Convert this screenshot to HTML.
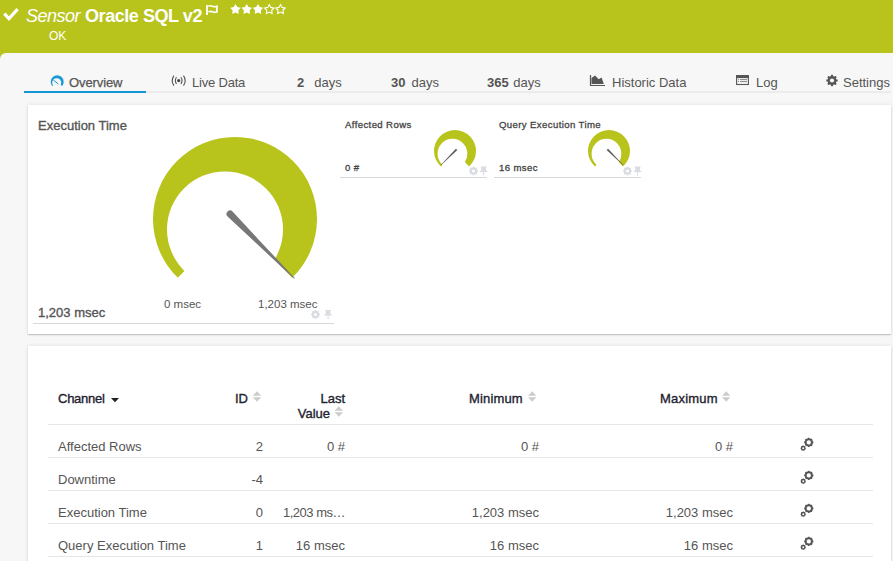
<!DOCTYPE html>
<html><head><meta charset="utf-8">
<style>
*{box-sizing:border-box;margin:0;padding:0}
html,body{width:893px;height:561px;overflow:hidden;background:#b8c41c;font-family:"Liberation Sans",sans-serif;position:relative}
.abs{position:absolute;white-space:nowrap}
#hdr{position:absolute;left:0;top:0;width:893px;height:53px;background:#b8c41c}
#page{position:absolute;left:0;top:53px;width:893px;height:508px;background:#f7f7f7;border-top-left-radius:6px}
.t{color:#fff}
.tab{position:absolute;top:75px;font-size:13px;color:#555;line-height:15px;white-space:nowrap}
.tab b{color:#555}
.card{position:absolute;background:#fff;box-shadow:0 0 4px rgba(0,0,0,0.10),0 1px 1px rgba(0,0,0,0.16)}
.lbl{position:absolute;white-space:nowrap;font-size:13px;line-height:15px;color:#555}
.med{-webkit-text-stroke:0.35px currentColor}
.sm{font-size:9.6px;color:#444;line-height:12px;-webkit-text-stroke:0.3px currentColor;letter-spacing:0.38px}
.hline{position:absolute;height:1px;background:#d8d8d8}
.th{position:absolute;white-space:nowrap;font-size:13px;color:#1e2230;line-height:15px;-webkit-text-stroke:0.35px currentColor}
.td{position:absolute;white-space:nowrap;font-size:13px;color:#555;line-height:15px}
.r{text-align:right}
</style></head><body>
<div id="hdr">
  <svg class="abs" style="left:3px;top:8px" width="16" height="13" viewBox="0 0 16 13"><path d="M1.3 5.6 L6 10.6 L14.6 1.2" fill="none" stroke="#fff" stroke-width="3.2"/></svg>
  <div class="abs t" style="left:26px;top:5px;font-size:18px;line-height:22px"><i style="letter-spacing:-0.5px">Sensor</i> <b style="letter-spacing:-0.45px">Oracle SQL v2</b></div>
  <!-- flag -->
  <svg class="abs" style="left:205px;top:4px" width="14" height="12" viewBox="0 0 14 12"><path d="M2 1 V11" stroke="#fff" stroke-width="1.8"/><path d="M3.4 2.1 Q5.5 1.3 7.5 2.3 Q9.8 3.2 11.9 2.3 V7.9 Q9.8 8.7 7.5 7.8 Q5.5 6.9 3.4 7.8" fill="none" stroke="#fff" stroke-width="1.7"/></svg>
  <!-- stars -->
  <svg class="abs" style="left:0;top:0" width="300" height="20" viewBox="0 0 300 20">
    
    <path transform="translate(235.5,9.5)" d="M0.00,-5.50 L1.76,-2.43 L5.23,-1.70 L2.85,0.93 L3.23,4.45 L0.00,3.00 L-3.23,4.45 L-2.85,0.93 L-5.23,-1.70 L-1.76,-2.43 Z" fill="#fff"/>
    <path transform="translate(246.75,9.5)" d="M0.00,-5.50 L1.76,-2.43 L5.23,-1.70 L2.85,0.93 L3.23,4.45 L0.00,3.00 L-3.23,4.45 L-2.85,0.93 L-5.23,-1.70 L-1.76,-2.43 Z" fill="#fff"/>
    <path transform="translate(258,9.5)" d="M0.00,-5.50 L1.76,-2.43 L5.23,-1.70 L2.85,0.93 L3.23,4.45 L0.00,3.00 L-3.23,4.45 L-2.85,0.93 L-5.23,-1.70 L-1.76,-2.43 Z" fill="#fff"/>
    <path transform="translate(269.25,9.5)" d="M0.00,-4.90 L1.53,-2.10 L4.66,-1.51 L2.47,0.80 L2.88,3.96 L0.00,2.60 L-2.88,3.96 L-2.47,0.80 L-4.66,-1.51 L-1.53,-2.10 Z" fill="none" stroke="#fff" stroke-width="1.1"/>
    <path transform="translate(280.5,9.5)" d="M0.00,-4.90 L1.53,-2.10 L4.66,-1.51 L2.47,0.80 L2.88,3.96 L0.00,2.60 L-2.88,3.96 L-2.47,0.80 L-4.66,-1.51 L-1.53,-2.10 Z" fill="none" stroke="#fff" stroke-width="1.1"/>
  </svg>
  <div class="abs t" style="left:49px;top:29px;font-size:12px;line-height:14px">OK</div>
</div>
<div id="page"></div>

<!-- tabs -->
<div class="abs" style="left:24px;top:91px;width:867px;height:2px;background:#ececec"></div>
<div class="abs" style="left:24px;top:91px;width:122px;height:2px;background:#1496d5"></div>
<svg class="abs" style="left:0;top:0" width="100" height="100" viewBox="0 0 100 100">
  <path d="M57.2,82.4 L52.2,86 A6.5,6.5 0 1 1 62.2,86 Z" fill="#1c9ad6"/>
  <circle cx="56.7" cy="82.7" r="4.5" fill="#f7f7f7"/>
  <path d="M53.3,80 L58.3,84" stroke="#1c9ad6" stroke-width="1"/>
</svg>
<div class="tab" style="left:69px;-webkit-text-stroke:0.25px #555;letter-spacing:-0.1px">Overview</div>
<svg class="abs" style="left:0;top:0" width="200" height="100" viewBox="0 0 200 100">
  <circle cx="178.7" cy="80.6" r="1.6" fill="#444"/>
  <path d="M176.5,77.3 Q174.2,80.6 176.5,83.9 M180.9,77.3 Q183.2,80.6 180.9,83.9" fill="none" stroke="#555" stroke-width="1.1"/>
  <path d="M173.9,75.6 Q170.6,80.6 173.9,85.6 M183.5,75.6 Q186.8,80.6 183.5,85.6" fill="none" stroke="#555" stroke-width="1.1"/>
</svg>
<div class="tab" style="left:192px;letter-spacing:-0.2px">Live Data</div>
<div class="tab" style="left:297px"><b>2</b><span style="margin-left:10px">days</span></div>
<div class="tab" style="left:391px"><b>30</b><span style="margin-left:6px">days</span></div>
<div class="tab" style="left:487px"><b>365</b><span style="margin-left:4.5px">days</span></div>
<svg class="abs" style="left:589px;top:74px" width="18" height="13" viewBox="0 0 18 13">
  <path d="M1.5 1 V11.5 H16" fill="none" stroke="#555" stroke-width="1.2"/>
  <path d="M2.5 10 V4 L6 1.5 L9.8 5.3 L12.6 3.5 L14.8 10 Z" fill="#555"/>
</svg>
<div class="tab" style="left:612px">Historic Data</div>
<svg class="abs" style="left:735px;top:74px" width="15" height="12" viewBox="0 0 15 12">
  <rect x="1.6" y="1.6" width="11.8" height="8.9" fill="none" stroke="#555" stroke-width="1.1"/>
  <rect x="1.1" y="1.1" width="12.8" height="3" fill="#555"/>
  <path d="M5 5.6 H12 M5 7.6 H12 M3 5.6 H4 M3 7.6 H4" stroke="#777" stroke-width="0.9"/>
</svg>
<div class="tab" style="left:756px">Log</div>
<svg class="abs" style="left:0;top:0" width="893" height="100" viewBox="0 0 893 100">
  <g transform="translate(832,80.5)">
    <circle r="3.4" fill="none" stroke="#555" stroke-width="2.1"/>
    <g fill="#555">
      <rect x="-1" y="-5.7" width="2" height="11.4"/>
      <rect x="-1" y="-5.7" width="2" height="11.4" transform="rotate(45)"/>
      <rect x="-1" y="-5.7" width="2" height="11.4" transform="rotate(90)"/>
      <rect x="-1" y="-5.7" width="2" height="11.4" transform="rotate(135)"/>
    </g>
    <circle r="2.1" fill="#f7f7f7"/>
  </g>
</svg>
<div class="tab" style="left:843px">Settings</div>

<!-- card 1 -->
<div class="card" style="left:28px;top:105px;width:863px;height:229px"></div>
<div class="lbl med" style="left:38px;top:118px">Execution Time</div>
<div class="lbl med" style="left:38px;top:305px">1,203 msec</div>
<div class="lbl" style="left:164px;top:297px;font-size:11.5px;color:#555">0 msec</div>
<div class="lbl" style="left:258px;top:297px;font-size:11.5px;color:#555">1,203 msec</div>
<div class="hline" style="left:33px;top:323px;width:301px"></div>

<div class="lbl sm" style="left:345px;top:119px">Affected Rows</div>
<div class="lbl sm" style="left:345px;top:162px">0 #</div>
<div class="hline" style="left:340px;top:177px;width:147px"></div>
<div class="lbl sm" style="left:499px;top:119px">Query Execution Time</div>
<div class="lbl sm" style="left:499px;top:162px">16 msec</div>
<div class="hline" style="left:494px;top:177px;width:147px"></div>

<!-- card 2 -->
<div class="card" style="left:28px;top:346px;width:863px;height:240px"></div>
<div class="th" style="left:58px;top:391px;letter-spacing:-0.25px">Channel</div>
<svg class="abs" style="left:111px;top:397px" width="9" height="6" viewBox="0 0 9 6"><path d="M0 1 H8 L4 5.2 Z" fill="#222"/></svg>
<div class="th" style="left:235px;top:391px">ID</div>
<div class="th r" style="left:280px;top:391px;width:65px">Last</div>
<div class="th r" style="left:260px;top:406px;width:70px">Value</div>
<div class="th" style="left:469px;top:391px;letter-spacing:0.15px">Minimum</div>
<div class="th" style="left:660px;top:391px;letter-spacing:0.2px">Maximum</div>
<svg class="abs" style="left:0;top:0" width="893" height="561" viewBox="0 0 893 561">
  
  <path transform="translate(252.8,391.3)" d="M0 4.5 L4.2 0 L8.4 4.5 Z M0 6 L8.4 6 L4.2 10.5 Z" fill="#ccc"/>
  <path transform="translate(334.6,406.3)" d="M0 4.5 L4.2 0 L8.4 4.5 Z M0 6 L8.4 6 L4.2 10.5 Z" fill="#ccc"/>
  <path transform="translate(528,391.3)" d="M0 4.5 L4.2 0 L8.4 4.5 Z M0 6 L8.4 6 L4.2 10.5 Z" fill="#ccc"/>
  <path transform="translate(722,391.3)" d="M0 4.5 L4.2 0 L8.4 4.5 Z M0 6 L8.4 6 L4.2 10.5 Z" fill="#ccc"/>
</svg>
<div class="hline" style="left:48px;top:424px;width:825px;background:#e6e6e6"></div>
<div class="hline" style="left:48px;top:457px;width:825px;background:#e6e6e6"></div>
<div class="hline" style="left:48px;top:490px;width:825px;background:#e6e6e6"></div>
<div class="hline" style="left:48px;top:523px;width:825px;background:#e6e6e6"></div>
<div class="hline" style="left:48px;top:556px;width:825px;background:#e6e6e6"></div>

<div class="td" style="left:58px;top:439px">Affected Rows</div>
<div class="td" style="left:58px;top:472px">Downtime</div>
<div class="td" style="left:58px;top:505px">Execution Time</div>
<div class="td" style="left:58px;top:538px">Query Execution Time</div>

<div class="td r" style="left:213px;top:439px;width:50px">2</div>
<div class="td r" style="left:213px;top:472px;width:50px">-4</div>
<div class="td r" style="left:213px;top:505px;width:50px">0</div>
<div class="td r" style="left:213px;top:538px;width:50px">1</div>

<div class="td r" style="left:265px;top:439px;width:80px">0 #</div>
<div class="td r" style="left:265px;top:505px;width:80px;letter-spacing:-0.5px">1,203 ms…</div>
<div class="td r" style="left:265px;top:538px;width:80px">16 msec</div>

<div class="td r" style="left:439px;top:439px;width:100px">0 #</div>
<div class="td r" style="left:439px;top:505px;width:100px">1,203 msec</div>
<div class="td r" style="left:439px;top:538px;width:100px">16 msec</div>

<div class="td r" style="left:633px;top:439px;width:100px">0 #</div>
<div class="td r" style="left:633px;top:505px;width:100px">1,203 msec</div>
<div class="td r" style="left:633px;top:538px;width:100px">16 msec</div>

<svg class="abs" style="left:0;top:0" width="893" height="561" viewBox="0 0 893 561">
  
  <g transform="translate(808.8,442.4)">
      <circle cx="0" cy="0" r="3.3" fill="none" stroke="#555" stroke-width="1.8"/>
      <g fill="#555"><rect x="-0.75" y="-4.6" width="1.5" height="9.2"/><rect x="-0.75" y="-4.6" width="1.5" height="9.2" transform="rotate(45)"/><rect x="-0.75" y="-4.6" width="1.5" height="9.2" transform="rotate(90)"/><rect x="-0.75" y="-4.6" width="1.5" height="9.2" transform="rotate(135)"/></g>
      <circle r="2.1" fill="#fff"/>
      <g transform="translate(-5.6,5.8)">
        <circle r="1.8" fill="none" stroke="#555" stroke-width="1.1"/>
        <g fill="#555"><rect x="-0.45" y="-2.7" width="0.9" height="5.4"/><rect x="-0.45" y="-2.7" width="0.9" height="5.4" transform="rotate(45)"/><rect x="-0.45" y="-2.7" width="0.9" height="5.4" transform="rotate(90)"/><rect x="-0.45" y="-2.7" width="0.9" height="5.4" transform="rotate(135)"/></g>
        <circle r="0.9" fill="#fff"/>
      </g>
    </g>
  <g transform="translate(808.8,475.4)">
      <circle cx="0" cy="0" r="3.3" fill="none" stroke="#555" stroke-width="1.8"/>
      <g fill="#555"><rect x="-0.75" y="-4.6" width="1.5" height="9.2"/><rect x="-0.75" y="-4.6" width="1.5" height="9.2" transform="rotate(45)"/><rect x="-0.75" y="-4.6" width="1.5" height="9.2" transform="rotate(90)"/><rect x="-0.75" y="-4.6" width="1.5" height="9.2" transform="rotate(135)"/></g>
      <circle r="2.1" fill="#fff"/>
      <g transform="translate(-5.6,5.8)">
        <circle r="1.8" fill="none" stroke="#555" stroke-width="1.1"/>
        <g fill="#555"><rect x="-0.45" y="-2.7" width="0.9" height="5.4"/><rect x="-0.45" y="-2.7" width="0.9" height="5.4" transform="rotate(45)"/><rect x="-0.45" y="-2.7" width="0.9" height="5.4" transform="rotate(90)"/><rect x="-0.45" y="-2.7" width="0.9" height="5.4" transform="rotate(135)"/></g>
        <circle r="0.9" fill="#fff"/>
      </g>
    </g>
  <g transform="translate(808.8,508.4)">
      <circle cx="0" cy="0" r="3.3" fill="none" stroke="#555" stroke-width="1.8"/>
      <g fill="#555"><rect x="-0.75" y="-4.6" width="1.5" height="9.2"/><rect x="-0.75" y="-4.6" width="1.5" height="9.2" transform="rotate(45)"/><rect x="-0.75" y="-4.6" width="1.5" height="9.2" transform="rotate(90)"/><rect x="-0.75" y="-4.6" width="1.5" height="9.2" transform="rotate(135)"/></g>
      <circle r="2.1" fill="#fff"/>
      <g transform="translate(-5.6,5.8)">
        <circle r="1.8" fill="none" stroke="#555" stroke-width="1.1"/>
        <g fill="#555"><rect x="-0.45" y="-2.7" width="0.9" height="5.4"/><rect x="-0.45" y="-2.7" width="0.9" height="5.4" transform="rotate(45)"/><rect x="-0.45" y="-2.7" width="0.9" height="5.4" transform="rotate(90)"/><rect x="-0.45" y="-2.7" width="0.9" height="5.4" transform="rotate(135)"/></g>
        <circle r="0.9" fill="#fff"/>
      </g>
    </g>
  <g transform="translate(808.8,541.4)">
      <circle cx="0" cy="0" r="3.3" fill="none" stroke="#555" stroke-width="1.8"/>
      <g fill="#555"><rect x="-0.75" y="-4.6" width="1.5" height="9.2"/><rect x="-0.75" y="-4.6" width="1.5" height="9.2" transform="rotate(45)"/><rect x="-0.75" y="-4.6" width="1.5" height="9.2" transform="rotate(90)"/><rect x="-0.75" y="-4.6" width="1.5" height="9.2" transform="rotate(135)"/></g>
      <circle r="2.1" fill="#fff"/>
      <g transform="translate(-5.6,5.8)">
        <circle r="1.8" fill="none" stroke="#555" stroke-width="1.1"/>
        <g fill="#555"><rect x="-0.45" y="-2.7" width="0.9" height="5.4"/><rect x="-0.45" y="-2.7" width="0.9" height="5.4" transform="rotate(45)"/><rect x="-0.45" y="-2.7" width="0.9" height="5.4" transform="rotate(90)"/><rect x="-0.45" y="-2.7" width="0.9" height="5.4" transform="rotate(135)"/></g>
        <circle r="0.9" fill="#fff"/>
      </g>
    </g>

  <!-- gauges -->
  <g transform="translate(235,219)">
    <path d="M0,0 L-57.17,58.79 A82,82 0 1 1 57.17,58.79 Z" fill="#b8c41c"/>
    <circle cx="-10" cy="10.4" r="58" fill="#fff"/>
    <path transform="rotate(45)" d="M-7,-3.5 L30,-2.2 L84,-0.4 L84,0.4 L30,2.2 L-7,3.5 A3.5,3.5 0 0 1 -7,-3.5 Z" fill="#777"/>
  </g>
  <g transform="translate(455,151) scale(0.256)">
    <path d="M0,0 L-54.87,60.94 A82,82 0 1 1 54.87,60.94 Z" fill="#b8c41c"/>
    <circle cx="-10" cy="10.4" r="58" fill="#fff"/>
    <path transform="rotate(135)" d="M-9,-3.8 L78,-0.8 L78,0.8 L-9,3.8 Z" fill="#5a5a5a"/>
  </g>
  <g transform="translate(609,151) scale(0.256)">
    <path d="M0,0 L-54.87,60.94 A82,82 0 1 1 54.87,60.94 Z" fill="#b8c41c"/>
    <circle cx="-10" cy="10.4" r="58" fill="#fff"/>
    <path transform="rotate(45)" d="M-9,-3.8 L78,-0.8 L78,0.8 L-9,3.8 Z" fill="#5a5a5a"/>
  </g>

  <!-- small gear + pin icons -->
  
  <g transform="translate(310.5,310)">
      <g transform="translate(5,4.5)">
        <circle r="2.8" fill="none" stroke="#d8dbe0" stroke-width="1.8"/>
        <g fill="#d8dbe0"><rect x="-0.8" y="-4.4" width="1.6" height="8.8"/><rect x="-0.8" y="-4.4" width="1.6" height="8.8" transform="rotate(45)"/><rect x="-0.8" y="-4.4" width="1.6" height="8.8" transform="rotate(90)"/><rect x="-0.8" y="-4.4" width="1.6" height="8.8" transform="rotate(135)"/></g>
        <circle r="1.5" fill="#fff"/>
      </g>
      <g transform="translate(14,0)" fill="#d8dbe0">
        <rect x="0.8" y="0" width="5.6" height="1.4"/>
        <rect x="1.3" y="1.2" width="4.6" height="3.2"/>
        <rect x="0" y="4.2" width="7.2" height="1.4"/>
        <rect x="3.1" y="5.5" width="1" height="3.5"/>
      </g>
    </g>
  <g transform="translate(468.5,166.5)">
      <g transform="translate(5,4.5)">
        <circle r="2.8" fill="none" stroke="#d8dbe0" stroke-width="1.8"/>
        <g fill="#d8dbe0"><rect x="-0.8" y="-4.4" width="1.6" height="8.8"/><rect x="-0.8" y="-4.4" width="1.6" height="8.8" transform="rotate(45)"/><rect x="-0.8" y="-4.4" width="1.6" height="8.8" transform="rotate(90)"/><rect x="-0.8" y="-4.4" width="1.6" height="8.8" transform="rotate(135)"/></g>
        <circle r="1.5" fill="#fff"/>
      </g>
      <g transform="translate(11.5,0)" fill="#d8dbe0">
        <rect x="0.8" y="0" width="5.6" height="1.4"/>
        <rect x="1.3" y="1.2" width="4.6" height="3.2"/>
        <rect x="0" y="4.2" width="7.2" height="1.4"/>
        <rect x="3.1" y="5.5" width="1" height="3.5"/>
      </g>
    </g>
  <g transform="translate(622.5,166.5)">
      <g transform="translate(5,4.5)">
        <circle r="2.8" fill="none" stroke="#d8dbe0" stroke-width="1.8"/>
        <g fill="#d8dbe0"><rect x="-0.8" y="-4.4" width="1.6" height="8.8"/><rect x="-0.8" y="-4.4" width="1.6" height="8.8" transform="rotate(45)"/><rect x="-0.8" y="-4.4" width="1.6" height="8.8" transform="rotate(90)"/><rect x="-0.8" y="-4.4" width="1.6" height="8.8" transform="rotate(135)"/></g>
        <circle r="1.5" fill="#fff"/>
      </g>
      <g transform="translate(11.5,0)" fill="#d8dbe0">
        <rect x="0.8" y="0" width="5.6" height="1.4"/>
        <rect x="1.3" y="1.2" width="4.6" height="3.2"/>
        <rect x="0" y="4.2" width="7.2" height="1.4"/>
        <rect x="3.1" y="5.5" width="1" height="3.5"/>
      </g>
    </g>
</svg>

</body></html>
